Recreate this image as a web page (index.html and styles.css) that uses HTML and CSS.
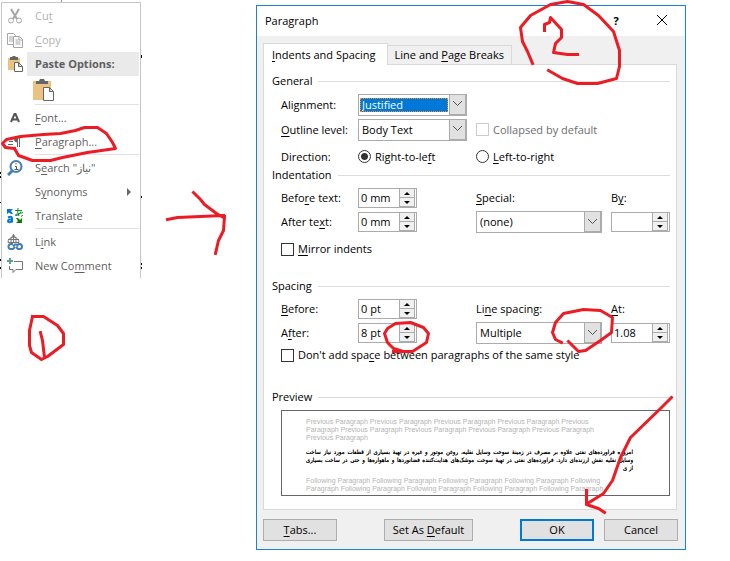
FILE: index.html
```
<!DOCTYPE html>
<html lang="en">
<head>
    <meta charset="UTF-8">
    <meta name="viewport" content="width=device-width, initial-scale=1.0">
    <title>Paragraph settings</title>
    <link rel="stylesheet" href="styles.css">
</head>
<body>
    <div class="page">
        <nav class="menu">
            <button type="button" class="item" disabled>
                <svg class="icon" width="16" height="16" viewBox="0 0 16 16" fill="none" stroke="#a6a6a6"><path d="M4 1l6 10M12 1L6 11" stroke-width="2"/><circle cx="4" cy="12.500" r="2.500"/><circle cx="12" cy="12.500" r="2.500"/></svg>
                <span>Cu<u>t</u></span>
            </button>
            <button type="button" class="item" disabled>
                <svg class="icon" width="16" height="16" viewBox="0 0 16 16" fill="#fff" stroke="#a6a6a6"><path d="M.5 1.500h6l3 3v8h-9zM2 5h4M2 7h4M2 9h4"/><path d="M6.500 4.500h6l3 3v8h-9zM12 4.500v3.500h3.500M8.500 8h3M8.500 10h5M8.500 12h5"/></svg>
                <span><u>C</u>opy</span>
            </button>
            <div class="item header">
                <svg class="icon" width="16" height="16" viewBox="0 0 16 16"><path d="M1 2h12v12H1z" fill="#eac282"/><path d="M3 1h2l1-1h2l1 1h2v3H3z" fill="#666"/><path d="M7.500 6.500h4l4 4v5h-8zM11.500 6.500v4h4" fill="#fff" stroke="#666"/></svg>
                <span>Paste Options:</span>
            </div>
            <button type="button" class="item paste" aria-label="Keep text only">
                <svg width="22" height="24" viewBox="0 0 22 24"><path d="M0 3h18v19H0z" fill="#eac282"/><path d="M3 3h3l1-2h4l1 2h3v3H3z" fill="#666"/><path d="M10.500 9.500h6l4 4v9h-10zM16.500 9.500v4h4" fill="#fff" stroke="#666"/></svg>
            </button>
            <hr>
            <button type="button" class="item">
                <svg class="icon" width="16" height="16" viewBox="0 0 16 16" fill="none" stroke="#555" stroke-width="2"><path d="M4 12L7.500 4h1L12 12M5.500 9.500h5"/></svg>
                <span><u>F</u>ont...</span>
            </button>
            <button type="button" class="item">
                <svg class="icon" width="16" height="16" viewBox="0 0 16 16" fill="none" stroke="#666"><path d="M1 4.500h5M2 7.500h4M1 10.500h5M2 13.500h4M9 3.500h6M10.500 4v9M12.500 4v9"/><path d="M10 3a2.500 2.500 0 0 0 0 5z" fill="#666"/></svg>
                <span><u>P</u>aragraph...</span>
            </button>
            <hr>
            <button type="button" class="item">
                <svg class="icon" width="16" height="16" viewBox="0 0 16 16" fill="none" stroke="#447db5"><circle cx="9" cy="6.500" r="5.500" stroke-width="2"/><path d="M5 11l-4 4" stroke-width="3"/><path d="M8 6.500h1.500v3M7.500 9.500h4M9 3v1.500" stroke="#555"/></svg>
                <span>S<u>e</u>arch "نیاز"</span>
            </button>
            <button type="button" class="item">
                <span class="icon"></span>
                <span>S<u>y</u>nonyms</span>
                <svg class="more" width="4" height="8" viewBox="0 0 4 8" fill="#666"><path d="M0 0l4 4-4 4z"/></svg>
            </button>
            <button type="button" class="item">
                <svg class="icon" width="16" height="16" viewBox="0 0 16 16" fill="none"><path d="M0 1h6L4 3l2 3H4L2 4.500 0 6z" fill="#0078d7"/><path d="M1 9.500q4-2 4 1v4M5 11.500q-4-.5-4 1.500t4 .5" stroke="#0078d7" stroke-width="2"/><path d="M8 2.500h7M11 0q-1 5 1 8M14 3.500Q12 8 9 7.500T14 5t0 3.500" stroke="#138a2c"/><path d="M15 15H9l2-2-2-3h2l2 2 2-2z" fill="#107c10"/></svg>
                <span>Tran<u>s</u>late</span>
            </button>
            <hr>
            <button type="button" class="item">
                <svg class="icon" width="16" height="16" viewBox="0 0 16 16" fill="none"><path d="M1 8.500a5.500 5.500 0 1 1 11 0M1 5.500h11M1 8.500h11M6.500 0v9M4 9Q3 4 6.500.500 10 4 9 9" stroke="#777"/><path d="M6 10H4a2.500 2.500 0 0 0 0 5h2l2-2M11 10h1.500a2.500 2.500 0 0 1 0 5H11l-2-2M6 12.500L8 10.500h2l1 2" stroke="#447db5" stroke-width="2"/></svg>
                <span>L<u>i</u>nk</span>
            </button>
            <button type="button" class="item">
                <svg class="icon" width="16" height="16" viewBox="0 0 16 16" fill="none"><path d="M7 3.500h8.500v8H9l-3 3v-3H2.500V8" stroke="#777"/><path d="M0 3h6M3 0v6" stroke="#5f9f8a" stroke-width="2"/></svg>
                <span>New Co<u>m</u>ment</span>
            </button>
        </nav>

        <form class="dialog">
            <div class="titlebar">
                <h1>Paragraph</h1>
                <button type="button">?</button>
                <button type="button" aria-label="Close"><svg width="10" height="10" viewBox="0 0 10 10" stroke="#000" fill="none"><path d="M0 0l10 10M10 0L0 10"/></svg></button>
            </div>
            <div class="tabs">
                <button type="button" class="tab active"><u>I</u>ndents and Spacing</button>
                <button type="button" class="tab">Line and <u>P</u>age Breaks</button>
            </div>
            <div class="panel">
                <h2>General</h2>
                <div class="grid general">
                    <label for="alignment">Ali<u>g</u>nment:</label>
                    <div class="select focused">
                        <select id="alignment"><option>Justified</option></select>
                        <span class="arrow"><svg width="9" height="6" viewBox="0 0 9 6"><path d="M0 0l4.500 4.500L9 0"/></svg></span>
                    </div>
                    <span></span><span></span>
                    <label for="outline"><u>O</u>utline level:</label>
                    <div class="select">
                        <select id="outline"><option>Body Text</option></select>
                        <span class="arrow"><svg width="9" height="6" viewBox="0 0 9 6"><path d="M0 0l4.500 4.500L9 0"/></svg></span>
                    </div>
                    <label class="check wide off"><input type="checkbox" disabled>Collapsed by default</label>
                    <span class="direction">Direction:</span>
                    <label class="check direction"><input type="radio" name="direction" checked><span>Right-to-le<u>f</u>t</span></label>
                    <label class="check direction wide"><input type="radio" name="direction"><span><u>L</u>eft-to-right</span></label>
                </div>

                <h2>Indentation</h2>
                <div class="grid">
                    <label for="beforeText">Befo<u>r</u>e text:</label>
                    <div class="spin">
                        <input type="text" id="beforeText" value="0 mm">
                        <span class="steps"><button type="button" class="up" aria-label="Up"></button><button type="button" class="down" aria-label="Down"></button></span>
                    </div>
                    <label for="special"><u>S</u>pecial:</label>
                    <label for="by">B<u>y</u>:</label>
                    <label for="afterText">After te<u>x</u>t:</label>
                    <div class="spin">
                        <input type="text" id="afterText" value="0 mm">
                        <span class="steps"><button type="button" class="up" aria-label="Up"></button><button type="button" class="down" aria-label="Down"></button></span>
                    </div>
                    <div class="select">
                        <select id="special"><option>(none)</option></select>
                        <span class="arrow"><svg width="9" height="6" viewBox="0 0 9 6"><path d="M0 0l4.500 4.500L9 0"/></svg></span>
                    </div>
                    <div class="spin">
                        <input type="text" id="by" value="">
                        <span class="steps"><button type="button" class="up" aria-label="Up"></button><button type="button" class="down" aria-label="Down"></button></span>
                    </div>
                </div>
                <label class="check line mirror"><input type="checkbox"><span><u>M</u>irror indents</span></label>

                <h2>Spacing</h2>
                <div class="grid">
                    <label for="before"><u>B</u>efore:</label>
                    <div class="spin">
                        <input type="text" id="before" value="0 pt">
                        <span class="steps"><button type="button" class="up" aria-label="Up"></button><button type="button" class="down" aria-label="Down"></button></span>
                    </div>
                    <label for="lineSpacing">Li<u>n</u>e spacing:</label>
                    <label for="at"><u>A</u>t:</label>
                    <label for="after">A<u>f</u>ter:</label>
                    <div class="spin">
                        <input type="text" id="after" value="8 pt">
                        <span class="steps"><button type="button" class="up" aria-label="Up"></button><button type="button" class="down" aria-label="Down"></button></span>
                    </div>
                    <div class="select">
                        <select id="lineSpacing"><option>Multiple</option></select>
                        <span class="arrow"><svg width="9" height="6" viewBox="0 0 9 6"><path d="M0 0l4.500 4.500L9 0"/></svg></span>
                    </div>
                    <div class="spin">
                        <input type="text" id="at" value="1.08">
                        <span class="steps"><button type="button" class="up" aria-label="Up"></button><button type="button" class="down" aria-label="Down"></button></span>
                    </div>
                </div>
                <label class="check line same"><input type="checkbox"><span>Don't add spa<u>c</u>e between paragraphs of the same style</span></label>

                <h2>Preview</h2>
                <div class="preview">
                    <p>Previous Paragraph Previous Paragraph Previous Paragraph Previous Paragraph Previous<br>Paragraph Previous Paragraph Previous Paragraph Previous Paragraph Previous Paragraph<br>Previous Paragraph</p>
                    <div class="sample" dir="rtl" lang="fa">
                        <p class="full">امروزه فراورده‌های نفتی علاوه بر مصرف در زمینهٔ سوخت وسایل نقلیه، روغن موتور و غیره در تهیهٔ بسیاری از قطعات مورد نیاز ساخت<br>وسایل نقلیه نقش ارزنده‌ای دارد. فراورده‌های نفتی در تهیهٔ سوخت موشک‌های هدایت‌کننده فضانوردها و ماهواره‌ها و حتی در ساخت بسیاری</p>
                        <p>از ی</p>
                    </div>
                    <p>Following Paragraph Following Paragraph Following Paragraph Following Paragraph Following<br>Paragraph Following Paragraph Following Paragraph Following Paragraph Following Paragraph</p>
                </div>
            </div>
            <div class="buttons">
                <button type="button"><u>T</u>abs...</button>
                <button type="button" class="set-default">Set As <u>D</u>efault</button>
                <button type="submit" class="ok">OK</button>
                <button type="button">Cancel</button>
            </div>
        </form>
    </div>

    <!-- hand drawn red notes over the windows -->
    <svg class="notes" width="730" height="561" viewBox="0 0 730 561">
        <path d="M61 0h1v2h-1z" fill="#999"/>
        <path d="M141 55h1v3h-1zM141 196h1v2h-1zM141 263h1v2h-1zM141 267h1v2h-1zM0 172h1v2h-1zM0 176h1v2h-1zM0 202h1v1h-1zM0 259h1v2h-1zM0 267h1v2h-1z"/>
        <g transform="translate(.5 .5)" fill="none" stroke="#ed1c24" stroke-width="3" stroke-linejoin="round" stroke-linecap="square">
            <path d="M14 148L5 147 2 143 6 139 20 136 43 134 60 133 75 130 84 127 97 127 106 133 112 142 115 148 108 149 87 152 62 157 50 160 32 160 18 155 14 148"/>
            <path d="M167 219L172 218 177 217 200 216 223 215M193 192L200 199 204 204 216 213 223 217M224 216L223 230 218 240 215 253"/>
            <path d="M32 316L43 316 57 325 63 333 63 344 47 356 41 359 31 352 29 345 29 330 32 316M40 332L42 340 44 357"/>
            <path d="M532 63L527 51 522 41 520 27 530 15 550 4 567 1 583 4 598 15 613 31 619 50 619 66 616 78 597 83 577 83 562 78 548 70"/>
            <path d="M544 30L544 24 549 22 550 17 561 29 561 37 555 43 553 52 567 54 577 54"/>
            <path d="M393 351L412 351 426 342 428 333 423 327 410 322 395 323 387 328 384 333 387 342 393 348 403 351"/>
            <path d="M561 342L555 339 552 332 555 322 563 313 583 309 600 310 612 317 611 332 600 340 585 350 578 351 568 341"/>
            <path d="M671 397L660 408 630 437 620 457 612 480 603 493 587 503M586 490L586 504 598 508 604 512"/>
        </g>
    </svg>
</body>
</html>
```
FILE: styles.css
```
* {
    box-sizing: border-box;
}
body {
    margin: 0;
    font-family: "Open Sans", "Noto Sans", sans-serif;
    font-size: 11px;
    line-height: 16px;
    color: #000;
    background-color: white;
}
button, input, select {
    font: inherit;
    color: inherit;
    margin: 0;
    padding: 0;
}
u {
    text-underline-offset: 2px;
}
.page {
    display: flex;
    align-items: flex-start;
    padding: 2px 44px 8px 1px;
}

/* context menu */
.menu {
    flex: none;
    width: 140px;
    padding: 1px 1px 0 0;
    border: 1px solid #c6c6c6;
    border-bottom: none;
    background-color: white;
    color: #5f5f5f;
}
.item {
    display: flex;
    align-items: center;
    width: 100%;
    height: 24px;
    padding: 0 0 0 5px;
    border: none;
    background: none;
    text-align: left;
    white-space: nowrap;
}
.item:disabled {
    color: #b1b1b1;
}
.item .icon {
    width: 16px;
    flex: none;
    margin-right: 12px;
}
.item .more {
    margin-left: auto;
    margin-right: 8px;
}
.header {
    font-weight: bold;
    background: linear-gradient(to right, white 25px, #eaeaea 25px);
}
.paste {
    height: 28px;
    padding-left: 31px;
}
.menu hr {
    height: 1px;
    margin: 0 0 1px 33px;
    border: none;
    background-color: #e1e1e1;
}

/* dialog window */
.dialog {
    flex: 1;
    min-width: 0;
    margin: 3px 0 0 115px;
    border: 1px solid #1883d7;
    background-color: #f0f0f0;
}
.titlebar {
    display: flex;
    align-items: center;
    height: 30px;
    padding-left: 8px;
    background-color: white;
}
.titlebar h1 {
    flex: 1;
    margin: 0;
    font-size: 11px;
    font-weight: normal;
}
.titlebar button {
    width: 46px;
    height: 28px;
    border: none;
    background: none;
    font-weight: bold;
}
.tabs {
    display: flex;
    align-items: flex-end;
    height: 28px;
    padding: 0 6px;
}
.tab {
    height: 19px;
    padding: 0 7px;
    border: 1px solid #d9d9d9;
    border-width: 1px 1px 0 0;
    background-color: #f0f0f0;
}
.tab.active {
    height: 22px;
    padding: 0 11px 0 8px;
    border-left-width: 1px;
    margin-bottom: -1px;
    background-color: white;
    position: relative;
}
.panel {
    margin: 0 8px 9px 6px;
    padding: 8px 6px 13px 8px;
    border: 1px solid #d9d9d9;
    background-color: white;
}
.panel h2 {
    display: flex;
    align-items: center;
    gap: 6px;
    margin: 0 0 3px;
    font-size: 11px;
    font-weight: normal;
}
.panel h2::after {
    content: "";
    flex: 1;
    height: 1px;
    background-color: #dcdcdc;
}
.grid {
    display: grid;
    grid-template-columns: 77px 118px 1fr 59px;
    grid-auto-rows: 24px;
    align-items: center;
    padding-left: 9px;
}
.grid.general {
    grid-auto-rows: 25px;
}
.wide {
    grid-column: span 2;
}
.direction {
    padding-top: 4px;
}
.select {
    position: relative;
    height: 22px;
    margin-right: 9px;
    border: 1px solid #ababab;
    background-color: white;
}
.select select {
    appearance: none;
    display: block;
    width: 100%;
    height: 20px;
    padding: 0 18px 0 3px;
    border: none;
    background: none;
    outline: none;
}
.select.focused {
    padding: 3px 18px 3px 1px;
}
.focused select {
    height: 14px;
    line-height: 12px;
    padding: 0 0 0 1px;
    border: 1px dotted #ff8728;
    background-color: #0078d7;
    color: white;
}
.arrow {
    position: absolute;
    top: 0;
    right: 0;
    bottom: 0;
    width: 17px;
    display: flex;
    align-items: center;
    justify-content: center;
    border: 1px solid #ababab;
    border-top-width: 0;
    background-color: #e1e1e1;
    pointer-events: none;
}
.arrow path {
    fill: none;
    stroke: #555;
}
.spin {
    display: flex;
    width: 59px;
    height: 20px;
    border: 1px solid #ababab;
    background-color: white;
}
.spin input {
    flex: 1;
    min-width: 0;
    padding-left: 2px;
    border: none;
    background: none;
    outline: none;
}
.steps {
    display: flex;
    flex-direction: column;
    width: 16px;
    border-left: 1px solid #ababab;
    margin-right: 1px;
}
.steps button {
    display: flex;
    align-items: center;
    justify-content: center;
    flex: 1;
    border: none;
    border-right: 1px solid #ababab;
    border-bottom: 1px solid #ababab;
    background-color: #f0f0f0;
}
.steps button::before {
    content: "";
    border: 3px solid transparent;
}
.steps .up::before {
    border-top-width: 0;
    border-bottom-color: #000;
}
.steps .down::before {
    border-bottom-width: 0;
    border-top-color: #000;
}
.check {
    display: flex;
    align-items: center;
    gap: 4px;
    white-space: nowrap;
}
.check input {
    appearance: none;
    flex: none;
    width: 13px;
    height: 13px;
    border: 1px solid #333;
    background-color: white;
}
.check input[type="radio"] {
    border-radius: 50%;
}
.check input[type="radio"]:checked {
    background: radial-gradient(circle, #333 3px, white 4px);
}
.off {
    color: #6d6d6d;
}
.check.off input {
    border-color: #ccc;
}
.line {
    height: 20px;
    margin-left: 9px;
}
.mirror {
    margin-top: 5px;
    margin-bottom: 19px;
}
.same {
    margin-bottom: 24px;
}

/* preview of the formatted text */
.preview {
    height: 86px;
    margin: 5px 0 0 9px;
    padding: 7px 36px 0 24px;
    border: 1px solid #666;
    overflow: hidden;
    white-space: nowrap;
    font-family: "Liberation Sans", Arial, sans-serif;
    font-size: 7px;
    line-height: 8px;
    color: #b4b4b4;
}
.preview p {
    margin: 0;
}
.preview .sample {
    margin: 6px 0 5px;
    font-family: "DejaVu Sans Condensed", "DejaVu Sans", sans-serif;
    font-size: 6px;
    color: #000;
    text-shadow: 0 0 0 #000;
}
.sample .full {
    white-space: normal;
    text-align: justify;
    text-align-last: justify;
}

.buttons {
    display: flex;
    gap: 10px;
    padding: 0 7px 8px 6px;
}
.buttons button {
    width: 74px;
    height: 22px;
    border: 1px solid #adadad;
    background-color: #e1e1e1;
}
.buttons .set-default {
    width: 89px;
    margin: 0 auto 0 37px;
}
.buttons .ok {
    border: 2px solid #0078d7;
}

.notes {
    position: absolute;
    top: 0;
    left: 0;
    pointer-events: none;
}
```
